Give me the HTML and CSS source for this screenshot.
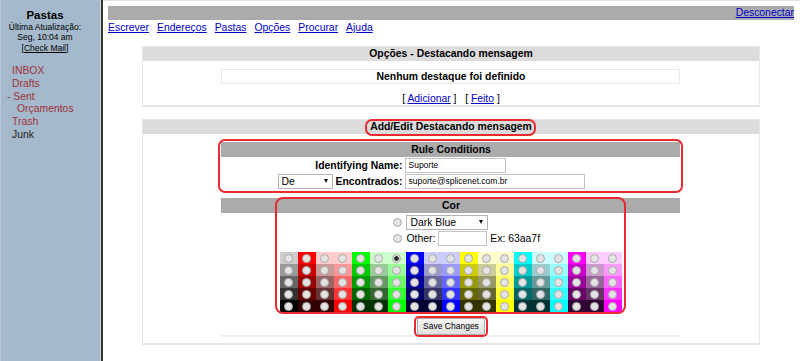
FILE: index.html
```html
<!DOCTYPE html>
<html lang="pt">
<head>
<meta charset="utf-8">
<title>Opções - Destacando mensagem</title>
<link rel="stylesheet" href="styles.css">
</head>
<body>
<div class="frameset">
  <aside class="left">
    <div class="left-head">
      <div class="title">Pastas</div>
      <div class="small">Última Atualização:</div>
      <div class="small">Seg, 10:04 am</div>
      <div class="small check">[<a href="#">Check Mail</a>]</div>
    </div>
    <div class="folders">
      <div class="folder"><a href="#">INBOX</a></div>
      <div class="folder"><a href="#">Drafts</a></div>
      <div class="folder sent"><span class="exp">-</span> <a href="#">Sent</a></div>
      <div class="folder sub"><a href="#">Orçamentos</a></div>
      <div class="folder"><a href="#">Trash</a></div>
      <div class="folder plain">Junk</div>
    </div>
  </aside>
  <div class="divider"></div>
  <main class="right">
    <div class="topbar"><a href="#">Desconectar</a></div>
    <nav class="menu">
      <a href="#">Escrever</a>
      <a href="#">Endereços</a>
      <a href="#">Pastas</a>
      <a href="#">Opções</a>
      <a href="#">Procurar</a>
      <a href="#">Ajuda</a>
    </nav>

    <section class="box first">
      <div class="box-head">Opções - Destacando mensagem</div>
      <div class="box-body">
        <div class="empty">Nenhum destaque foi definido</div>
        <div class="actions">[ <a href="#">Adicionar</a> ]&nbsp;&nbsp; [ <a href="#">Feito</a> ]</div>
      </div>
    </section>

    <section class="box second">
      <div class="box-head"><span class="mark">Add/Edit Destacando mensagem</span></div>
      <div class="box-body">
        <form class="edit">
          <div class="rule">
            <div class="bar">Rule Conditions</div>
            <div class="row">
              <div class="lab">Identifying Name:</div>
              <input class="txt name" type="text" value="Suporte">
            </div>
            <div class="row">
              <div class="lab"><div class="sel de"><span>De</span><i class="arrow"></i></div>Encontrados:</div>
              <input class="txt match" type="text" value="suporte@splicenet.com.br">
            </div>
          </div>

          <div class="cor">
            <div class="bar">Cor</div>
            <div class="row">
              <div class="lab"><input class="rd" type="radio" name="mode"></div>
              <div class="sel blue"><span>Dark Blue</span><i class="arrow"></i></div>
            </div>
            <div class="row">
              <div class="lab"><input class="rd" type="radio" name="mode"></div>
              <div class="other"><span>Other:</span><input class="txt hex" type="text" value=""><span>Ex: 63aa7f</span></div>
            </div>
            <div class="swatches">
              <label class="sw" style="--c:#ccc"><input class="rd" type="radio" name="c"></label>
              <label class="sw" style="--c:#f00"><input class="rd" type="radio" name="c"></label>
              <label class="sw" style="--c:#fcc"><input class="rd" type="radio" name="c"></label>
              <label class="sw" style="--c:#fcc"><input class="rd" type="radio" name="c"></label>
              <label class="sw" style="--c:#0f0"><input class="rd" type="radio" name="c"></label>
              <label class="sw" style="--c:#cfc"><input class="rd" type="radio" name="c"></label>
              <label class="sw" style="--c:#cfc"><input class="rd" type="radio" name="c" checked></label>
              <label class="sw" style="--c:#00f"><input class="rd" type="radio" name="c"></label>
              <label class="sw" style="--c:#ccf"><input class="rd" type="radio" name="c"></label>
              <label class="sw" style="--c:#ccf"><input class="rd" type="radio" name="c"></label>
              <label class="sw" style="--c:#ff0"><input class="rd" type="radio" name="c"></label>
              <label class="sw" style="--c:#ffc"><input class="rd" type="radio" name="c"></label>
              <label class="sw" style="--c:#ffc"><input class="rd" type="radio" name="c"></label>
              <label class="sw" style="--c:#0ff"><input class="rd" type="radio" name="c"></label>
              <label class="sw" style="--c:#cff"><input class="rd" type="radio" name="c"></label>
              <label class="sw" style="--c:#cff"><input class="rd" type="radio" name="c"></label>
              <label class="sw" style="--c:#f0f"><input class="rd" type="radio" name="c"></label>
              <label class="sw" style="--c:#fcf"><input class="rd" type="radio" name="c"></label>
              <label class="sw" style="--c:#fcf"><input class="rd" type="radio" name="c"></label>

              <label class="sw" style="--c:#999"><input class="rd" type="radio" name="c"></label>
              <label class="sw" style="--c:#c00"><input class="rd" type="radio" name="c"></label>
              <label class="sw" style="--c:#c99"><input class="rd" type="radio" name="c"></label>
              <label class="sw" style="--c:#f99"><input class="rd" type="radio" name="c"></label>
              <label class="sw" style="--c:#0c0"><input class="rd" type="radio" name="c"></label>
              <label class="sw" style="--c:#9c9"><input class="rd" type="radio" name="c"></label>
              <label class="sw" style="--c:#9f9"><input class="rd" type="radio" name="c"></label>
              <label class="sw" style="--c:#00c"><input class="rd" type="radio" name="c"></label>
              <label class="sw" style="--c:#99c"><input class="rd" type="radio" name="c"></label>
              <label class="sw" style="--c:#99f"><input class="rd" type="radio" name="c"></label>
              <label class="sw" style="--c:#cc0"><input class="rd" type="radio" name="c"></label>
              <label class="sw" style="--c:#cc9"><input class="rd" type="radio" name="c"></label>
              <label class="sw" style="--c:#ff9"><input class="rd" type="radio" name="c"></label>
              <label class="sw" style="--c:#0cc"><input class="rd" type="radio" name="c"></label>
              <label class="sw" style="--c:#9cc"><input class="rd" type="radio" name="c"></label>
              <label class="sw" style="--c:#9ff"><input class="rd" type="radio" name="c"></label>
              <label class="sw" style="--c:#c0c"><input class="rd" type="radio" name="c"></label>
              <label class="sw" style="--c:#c9c"><input class="rd" type="radio" name="c"></label>
              <label class="sw" style="--c:#f9f"><input class="rd" type="radio" name="c"></label>

              <label class="sw" style="--c:#666"><input class="rd" type="radio" name="c"></label>
              <label class="sw" style="--c:#900"><input class="rd" type="radio" name="c"></label>
              <label class="sw" style="--c:#966"><input class="rd" type="radio" name="c"></label>
              <label class="sw" style="--c:#f66"><input class="rd" type="radio" name="c"></label>
              <label class="sw" style="--c:#090"><input class="rd" type="radio" name="c"></label>
              <label class="sw" style="--c:#696"><input class="rd" type="radio" name="c"></label>
              <label class="sw" style="--c:#6f6"><input class="rd" type="radio" name="c"></label>
              <label class="sw" style="--c:#009"><input class="rd" type="radio" name="c"></label>
              <label class="sw" style="--c:#669"><input class="rd" type="radio" name="c"></label>
              <label class="sw" style="--c:#66f"><input class="rd" type="radio" name="c"></label>
              <label class="sw" style="--c:#990"><input class="rd" type="radio" name="c"></label>
              <label class="sw" style="--c:#996"><input class="rd" type="radio" name="c"></label>
              <label class="sw" style="--c:#ff6"><input class="rd" type="radio" name="c"></label>
              <label class="sw" style="--c:#099"><input class="rd" type="radio" name="c"></label>
              <label class="sw" style="--c:#699"><input class="rd" type="radio" name="c"></label>
              <label class="sw" style="--c:#6ff"><input class="rd" type="radio" name="c"></label>
              <label class="sw" style="--c:#909"><input class="rd" type="radio" name="c"></label>
              <label class="sw" style="--c:#969"><input class="rd" type="radio" name="c"></label>
              <label class="sw" style="--c:#f6f"><input class="rd" type="radio" name="c"></label>

              <label class="sw" style="--c:#333"><input class="rd" type="radio" name="c"></label>
              <label class="sw" style="--c:#600"><input class="rd" type="radio" name="c"></label>
              <label class="sw" style="--c:#633"><input class="rd" type="radio" name="c"></label>
              <label class="sw" style="--c:#f33"><input class="rd" type="radio" name="c"></label>
              <label class="sw" style="--c:#060"><input class="rd" type="radio" name="c"></label>
              <label class="sw" style="--c:#363"><input class="rd" type="radio" name="c"></label>
              <label class="sw" style="--c:#3f3"><input class="rd" type="radio" name="c"></label>
              <label class="sw" style="--c:#006"><input class="rd" type="radio" name="c"></label>
              <label class="sw" style="--c:#336"><input class="rd" type="radio" name="c"></label>
              <label class="sw" style="--c:#33f"><input class="rd" type="radio" name="c"></label>
              <label class="sw" style="--c:#660"><input class="rd" type="radio" name="c"></label>
              <label class="sw" style="--c:#663"><input class="rd" type="radio" name="c"></label>
              <label class="sw" style="--c:#ff3"><input class="rd" type="radio" name="c"></label>
              <label class="sw" style="--c:#066"><input class="rd" type="radio" name="c"></label>
              <label class="sw" style="--c:#366"><input class="rd" type="radio" name="c"></label>
              <label class="sw" style="--c:#3ff"><input class="rd" type="radio" name="c"></label>
              <label class="sw" style="--c:#606"><input class="rd" type="radio" name="c"></label>
              <label class="sw" style="--c:#636"><input class="rd" type="radio" name="c"></label>
              <label class="sw" style="--c:#f3f"><input class="rd" type="radio" name="c"></label>

              <label class="sw" style="--c:#000"><input class="rd" type="radio" name="c"></label>
              <label class="sw" style="--c:#300"><input class="rd" type="radio" name="c"></label>
              <label class="sw" style="--c:#300"><input class="rd" type="radio" name="c"></label>
              <label class="sw" style="--c:#f00"><input class="rd" type="radio" name="c"></label>
              <label class="sw" style="--c:#030"><input class="rd" type="radio" name="c"></label>
              <label class="sw" style="--c:#030"><input class="rd" type="radio" name="c"></label>
              <label class="sw" style="--c:#0f0"><input class="rd" type="radio" name="c"></label>
              <label class="sw" style="--c:#003"><input class="rd" type="radio" name="c"></label>
              <label class="sw" style="--c:#003"><input class="rd" type="radio" name="c"></label>
              <label class="sw" style="--c:#00f"><input class="rd" type="radio" name="c"></label>
              <label class="sw" style="--c:#330"><input class="rd" type="radio" name="c"></label>
              <label class="sw" style="--c:#330"><input class="rd" type="radio" name="c"></label>
              <label class="sw" style="--c:#ff0"><input class="rd" type="radio" name="c"></label>
              <label class="sw" style="--c:#033"><input class="rd" type="radio" name="c"></label>
              <label class="sw" style="--c:#033"><input class="rd" type="radio" name="c"></label>
              <label class="sw" style="--c:#0ff"><input class="rd" type="radio" name="c"></label>
              <label class="sw" style="--c:#303"><input class="rd" type="radio" name="c"></label>
              <label class="sw" style="--c:#303"><input class="rd" type="radio" name="c"></label>
              <label class="sw" style="--c:#f0f"><input class="rd" type="radio" name="c"></label>
            </div>
          </div>

          <div class="save"><button class="btn" type="button">Save Changes</button></div>
        </form>
      </div>
    </section>
  </main>
</div>
</body>
</html>
```

FILE: styles.css
```css
* { box-sizing: border-box; }

html, body {
  margin: 0;
  padding: 0;
  height: 100%;
}

body {
  font-family: "Liberation Sans", Arial, sans-serif;
  font-size: 10.4px;
  color: #000;
  background: #fff;
  overflow: hidden;
}

a { color: #0000cc; text-decoration: underline; }

.frameset {
  display: flex;
  height: 100%;
}

/* ---------- left frame ---------- */
.left {
  width: 101px;
  flex: none;
  background: #a4b9cb;
  border-left: 1px solid #bccbd8;
  border-right: 1px solid #d4d4d4;
}

.divider {
  width: 2px;
  flex: none;
  background: #353535;
}

.left-head {
  width: 88px;
  text-align: center;
  padding-top: 8px;
}

.title {
  font-weight: bold;
  font-size: 11.5px;
  line-height: 14px;
}

.small {
  font-size: 8.5px;
  line-height: 10px;
}

.small.check { margin-top: 1px; }
.small.check a { color: #000; }

.folders {
  margin-top: 12px;
  font-size: 10.4px;
  line-height: 12.8px;
}

.folder { padding-left: 11px; white-space: nowrap; }
.folder a { color: #a0323a; text-decoration: none; }
.folder.sent { padding-left: 6px; }
.folder.sent .exp { color: #a0323a; }
.folder.sub { padding-left: 16px; }
.folder.plain { color: #222; }

/* ---------- right frame ---------- */
.right {
  flex: 1;
  min-width: 0;
  border-top: 1px solid #e2e2e2;
  padding: 5px 6px 0 5px;
}

.topbar {
  background: #ababab;
  height: 14px;
  line-height: 14px;
  text-align: right;
}

.menu {
  display: flex;
  gap: 8px;
  line-height: 13px;
  margin-top: 1px;
}

.box {
  width: 90%;
  margin: 12px auto 0;
  border: 1px solid #e6e6e6;
  border-bottom-width: 2px;
}

.box-head {
  background: #dcdcdc;
  height: 14px;
  line-height: 14px;
  text-align: center;
  font-weight: bold;
}

.box.first .box-body { padding: 8px 0 0; }

.empty {
  width: 459px;
  margin: 0 auto;
  border: 1px solid #e8e8e8;
  line-height: 13px;
  text-align: center;
  font-weight: bold;
}

.actions {
  text-align: center;
  line-height: 13px;
  margin-top: 8px;
}

.box.second { margin-top: 12px; }
.box.second .box-body { padding: 8px 0 6px; }

/* red annotation marks */
.mark {
  position: relative;
  display: inline-block;
}
.mark::after {
  content: "";
  position: absolute;
  top: -1px;
  bottom: -2px;
  left: -5px;
  right: -4px;
  border: 2px solid #ea2a30;
  border-radius: 7px;
  pointer-events: none;
}

.edit {
  width: 459px;
  margin: 0 auto;
  border-bottom: 2px solid #efefef;
}

.rule {
  position: relative;
}
.rule::after {
  content: "";
  position: absolute;
  top: -3px;
  bottom: -4px;
  left: -3px;
  right: -3px;
  border: 2px solid #ea2a30;
  border-radius: 7px;
  pointer-events: none;
}

.bar {
  background: #ababab;
  line-height: 15px;
  text-align: center;
  font-weight: bold;
}

.row {
  display: grid;
  grid-template-columns: 181px auto;
  column-gap: 3px;
  align-items: center;
  height: 16px;
}

.lab {
  display: flex;
  justify-content: flex-end;
  align-items: center;
  gap: 3px;
  font-weight: bold;
  white-space: nowrap;
}

.txt {
  height: 15px;
  border: 1px solid #c3c3c3;
  font-family: "Liberation Sans", Arial, sans-serif;
  font-size: 8.5px;
  color: #000;
  padding: 0 2px;
  margin: 0;
  background: #fff;
  outline: none;
}

.txt.name { width: 101px; }
.txt.match { width: 180px; }
.txt.hex { width: 49px; }

.sel {
  display: flex;
  align-items: center;
  justify-content: space-between;
  height: 15px;
  border: 1px solid #b3b3b3;
  background: #fff;
  padding: 0 4px 0 3px;
  font-weight: normal;
  font-size: 10.4px;
}
.sel.de { width: 55px; }
.sel.blue { width: 82px; margin-left: 1px; }

.arrow {
  width: 0;
  height: 0;
  border-left: 2.5px solid transparent;
  border-right: 2.5px solid transparent;
  border-top: 4px solid #111;
}

.cor {
  position: relative;
  margin-top: 9px;
}
.cor::after {
  content: "";
  position: absolute;
  top: -1px;
  bottom: -2px;
  left: 54px;
  right: 54px;
  border: 2px solid #ea2a30;
  border-radius: 8px;
  pointer-events: none;
}

.cor .bar { margin-bottom: 1px; }

.other {
  display: flex;
  align-items: center;
  gap: 3px;
  margin-left: 1px;
}

.rd {
  -webkit-appearance: none;
  appearance: none;
  width: 9px;
  height: 9px;
  margin: 0;
  border-radius: 50%;
  border: 1px solid #a9a9a9;
  background: #e4e4e4;
}
.rd:checked {
  background: radial-gradient(circle, #2b2b2b 0 2px, #e4e4e4 2.6px);
}

.swatches {
  display: grid;
  grid-template-columns: repeat(19, 18px);
  grid-auto-rows: 12px;
  width: max-content;
  margin: 6px auto 0;
}

.sw {
  display: flex;
  align-items: center;
  justify-content: center;
  background: var(--c);
}

.save {
  text-align: center;
  margin-top: 6px;
  line-height: 0;
}

.btn {
  position: relative;
  height: 17px;
  padding: 0 5px;
  border: 1px solid #adadad;
  border-radius: 2px;
  background: linear-gradient(#f4f4f4, #e1e1e1);
  font-family: "Liberation Sans", Arial, sans-serif;
  font-size: 8.5px;
  color: #000;
  line-height: 15px;
}
.btn::after {
  content: "";
  position: absolute;
  top: -3px;
  bottom: -3px;
  left: -4px;
  right: -4px;
  border: 2px solid #ea2a30;
  border-radius: 5px;
  pointer-events: none;
}
```
